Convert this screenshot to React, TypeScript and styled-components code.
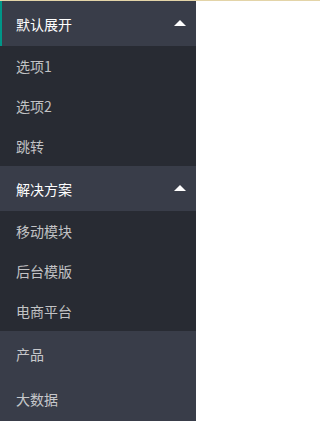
import styled, { createGlobalStyle } from 'styled-components';

const GlobalStyle = createGlobalStyle`
  html, body {
    margin: 0;
    padding: 0;
    background: #fff;
  }
  body {
    font-family: "Noto Sans CJK SC", "Noto Sans", sans-serif;
    font-size: 14px;
  }
`;

const TopLine = styled.div`
  height: 1px;
  background: #e3d4a8;
`;

const Nav = styled.ul`
  width: 196px;
  margin: 0;
  padding: 0;
  list-style: none;
  background: #393d49;
`;

const NavItem = styled.li``;

interface HeadProps {
  $active?: boolean;
  $muted?: boolean;
}

const NavHead = styled.div<HeadProps>`
  display: flex;
  align-items: center;
  justify-content: space-between;
  height: 45px;
  padding: 0 10px 0 ${(p) => (p.$active ? '14px' : '16px')};
  box-sizing: border-box;
  color: ${(p) => (p.$muted ? 'rgba(255, 255, 255, 0.72)' : '#fff')};
  border-left: ${(p) => (p.$active ? '2px solid #009688' : 'none')};
`;

const Arrow = styled.span`
  width: 0;
  height: 0;
  border-left: 6px solid transparent;
  border-right: 6px solid transparent;
  border-bottom: 6px solid #fff;
  margin-top: -2px;
`;

const Child = styled.ul`
  margin: 0;
  padding: 0;
  list-style: none;
  background: #282b33;
`;

const ChildItem = styled.li`
  display: flex;
  align-items: center;
  height: 40px;
  padding-left: 16px;
  color: rgba(255, 255, 255, 0.72);
`;

const groups = [
  { title: '默认展开', active: true, items: ['选项1', '选项2', '跳转'] },
  { title: '解决方案', active: false, items: ['移动模块', '后台模版', '电商平台'] },
];

const App = () => {
  return (
    <>
      <GlobalStyle />
      <TopLine />
      <Nav>
        {groups.map((g) => (
          <NavItem key={g.title}>
            <NavHead $active={g.active}>
              {g.title}
              <Arrow />
            </NavHead>
            <Child>
              {g.items.map((it) => (
                <ChildItem key={it}>{it}</ChildItem>
              ))}
            </Child>
          </NavItem>
        ))}
        <NavItem>
          <NavHead $muted>产品</NavHead>
        </NavItem>
        <NavItem>
          <NavHead $muted>大数据</NavHead>
        </NavItem>
      </Nav>
    </>
  );
};

export default App;
